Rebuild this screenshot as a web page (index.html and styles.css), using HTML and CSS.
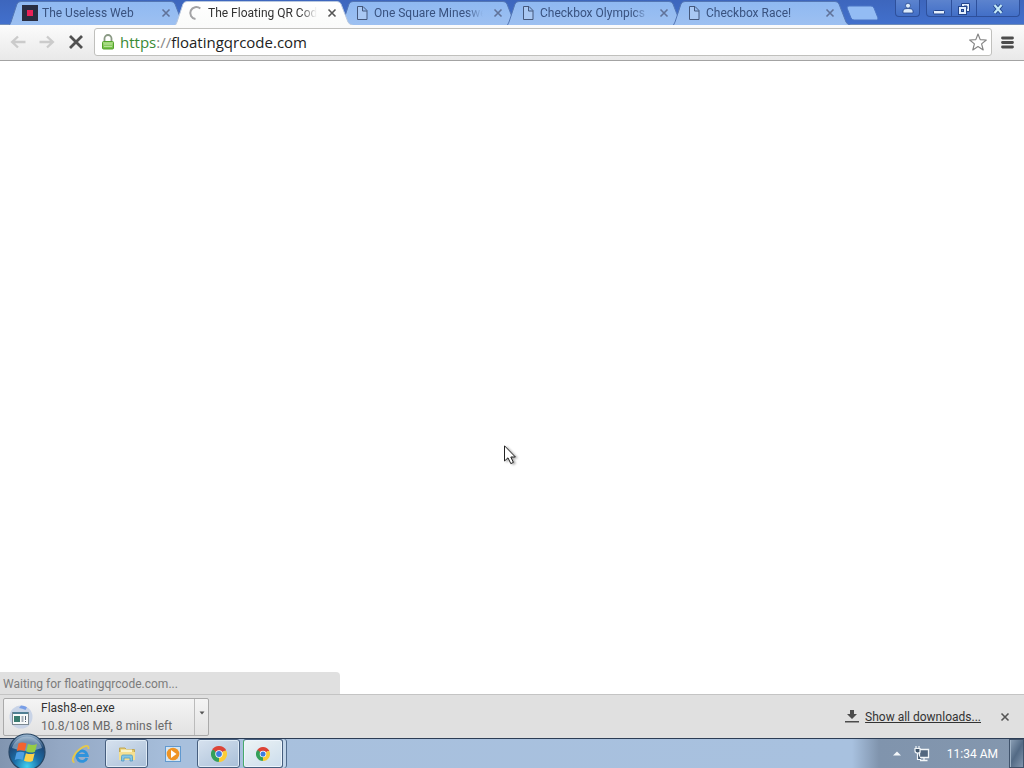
FILE: index.html
```html
<!DOCTYPE html>
<html lang="en">
<head>
<meta charset="utf-8">
<meta name="viewport" content="width=device-width, initial-scale=1">
<title>The Floating QR Code</title>
<link rel="stylesheet" href="styles.css">
</head>
<body>
<svg width="0" height="0" class="defs" aria-hidden="true">
  <defs>
    <linearGradient id="tabFill" x1="0" y1="0" x2="0" y2="1"><stop offset="0" stop-color="#8fb9f2"/><stop offset="1" stop-color="#9dc0f1"/></linearGradient>
    <linearGradient id="activeFill" x1="0" y1="0" x2="0" y2="1"><stop offset="0" stop-color="#ffffff"/><stop offset="1" stop-color="#fafbfa"/></linearGradient>
    <linearGradient id="lockFill" x1="0" y1="0" x2="0" y2="1"><stop offset="0" stop-color="#a9dc84"/><stop offset="1" stop-color="#6cbb3e"/></linearGradient>
    <radialGradient id="orb" cx="0.5" cy="0.9" r="0.9"><stop offset="0" stop-color="#3fd0f0"/><stop offset="0.4" stop-color="#1c6fa8"/><stop offset="0.75" stop-color="#1d4878"/><stop offset="1" stop-color="#a9c3da"/></radialGradient>
    <symbol id="tab" viewBox="0 0 178 25" preserveAspectRatio="none"><path d="M0.5 25 L2 22 L8 4 Q9 1.5 12 1.5 L162 1.5 Q165 1.5 166 4 L173 22 Q174 24.500 177.500 25" vector-effect="non-scaling-stroke"/></symbol>
    <symbol id="page" viewBox="0 0 16 16"><path d="M3.500 1.500 H9 L13 5.500 V14.500 H3.500 Z M8.500 1.500 V6 H13" fill="#a9c8f3" stroke="#44587c" stroke-width="1"/></symbol>
    <symbol id="close" viewBox="0 0 10 10"><path d="M1.500 1.500 L8.500 8.500 M8.500 1.500 L1.500 8.500" fill="none" stroke="currentColor" stroke-width="1.600"/></symbol>
    <symbol id="chrome" viewBox="0 0 16 16">
      <path d="M8 8 L1.070 4 A8 8 0 0 1 14.930 4 Z" fill="#dc4437"/>
      <path d="M8 8 L14.930 4 A8 8 0 0 1 8 16 Z" fill="#fbcc37"/>
      <path d="M8 8 L8 16 A8 8 0 0 1 1.070 4 Z" fill="#34a059"/>
      <path d="M8 4.500 H15.200 L14.500 3.500 H8 Z" fill="#dc4437"/>
      <path d="M5 9.700 L1.100 4 L3 4 L6 8 Z" fill="#34a059"/>
      <path d="M11.200 9.500 L7.500 16 L9 16 L12 9 Z" fill="#fbcc37"/>
      <circle cx="8" cy="8" r="3.700" fill="#fff"/><circle cx="8" cy="8" r="2.900" fill="#3d7de0"/>
    </symbol>
  </defs>
</svg>

<header class="tabstrip">
  <nav class="tabs" aria-label="Tabs">
    <div class="tab">
      <svg class="shape" aria-hidden="true"><use href="#tab"/></svg>
      <svg class="favicon" viewBox="0 0 16 16"><rect width="16" height="16" fill="#292d41"/><rect x="5" y="5" width="6" height="6" fill="#e92159"/></svg>
      <a class="title" href="#">The Useless Web</a>
      <button class="tab-close" aria-label="Close tab"><svg><use href="#close"/></svg></button>
    </div>
    <div class="tab active">
      <svg class="shape" aria-hidden="true"><use href="#tab"/></svg>
      <svg class="favicon" viewBox="0 0 16 16"><path d="M12.300 3.600 A6 6 0 1 0 7.500 14" fill="none" stroke="#a3a3a5" stroke-width="2"/></svg>
      <a class="title" href="#">The Floating QR Code</a>
      <button class="tab-close" aria-label="Close tab"><svg><use href="#close"/></svg></button>
    </div>
    <div class="tab">
      <svg class="shape" aria-hidden="true"><use href="#tab"/></svg>
      <svg class="favicon"><use href="#page"/></svg>
      <a class="title" href="#">One Square Minesweeper</a>
      <button class="tab-close" aria-label="Close tab"><svg><use href="#close"/></svg></button>
    </div>
    <div class="tab">
      <svg class="shape" aria-hidden="true"><use href="#tab"/></svg>
      <svg class="favicon"><use href="#page"/></svg>
      <a class="title" href="#">Checkbox Olympics</a>
      <button class="tab-close" aria-label="Close tab"><svg><use href="#close"/></svg></button>
    </div>
    <div class="tab">
      <svg class="shape" aria-hidden="true"><use href="#tab"/></svg>
      <svg class="favicon"><use href="#page"/></svg>
      <a class="title" href="#">Checkbox Race!</a>
      <button class="tab-close" aria-label="Close tab"><svg><use href="#close"/></svg></button>
    </div>
    <button class="new-tab" aria-label="New tab"><svg viewBox="0 0 34 16"><path d="M3 1 H25 Q27 1 28 3 L32 13 Q32 15 30.500 15 H8 Q6 15 5 13 L1 3 Q1 1 3 1 Z" fill="#93bcf4" stroke="#4a74c4"/></svg></button>
  </nav>
  <div class="window-controls">
    <button class="wc user" aria-label="User"><svg viewBox="0 0 12 12"><path d="M1 11 V9 Q1 6.500 6 6.500 Q11 6.500 11 9 V11 Z" fill="#dcebfb" stroke="#23458c" stroke-width="0.800"/><circle cx="6" cy="3.700" r="2.500" fill="#dcebfb" stroke="#23458c" stroke-width="0.800"/></svg></button>
    <div class="wc-group">
      <button class="wc" aria-label="Minimize"><svg viewBox="0 0 12 12"><rect x="0.500" y="7.500" width="11" height="3.500" rx="1" fill="#e4effc" stroke="#23458c"/></svg></button>
      <button class="wc" aria-label="Restore"><svg viewBox="0 0 12 12"><path d="M3.500 0.500 H11.500 V8.500 H3.500 Z" fill="#e4effc" stroke="#23458c"/><path d="M6 3 H9 V6" fill="none" stroke="#23458c"/><rect x="0.500" y="3.500" width="8" height="8" fill="#e4effc" stroke="#23458c"/><rect x="3.500" y="6.500" width="2" height="2" fill="#5986d8" stroke="#23458c"/></svg></button>
      <button class="wc wide" aria-label="Close"><svg viewBox="0 0 12 12"><path d="M2.500 2 L9.500 10 M9.500 2 L2.500 10" stroke="#23458c" stroke-width="4"/><path d="M2.500 2 L9.500 10 M9.500 2 L2.500 10" stroke="#c4e9f8" stroke-width="2.200"/></svg></button>
    </div>
  </div>
</header>

<div class="toolbar">
  <button class="nav" aria-label="Back"><svg viewBox="0 0 16 14"><path d="M15.500 7 H2 M8 1.500 L2.200 7 L8 12.500" fill="none" stroke="#cbcbcb" stroke-width="2.400"/></svg></button>
  <button class="nav" aria-label="Forward"><svg viewBox="0 0 16 14"><path d="M0.500 7 H14 M8 1.500 L13.800 7 L8 12.500" fill="none" stroke="#cbcbcb" stroke-width="2.400"/></svg></button>
  <button class="nav" aria-label="Stop"><svg viewBox="0 0 16 14"><path d="M2 1 L14 13 M14 1 L2 13" stroke="#505050" stroke-width="2.800"/></svg></button>
  <div class="omnibox">
    <svg class="lock" viewBox="0 0 12 16"><path d="M2.500 8 V4.500 A3.500 3.500 0 0 1 9.500 4.500 V8" fill="none" stroke="#8a9a84" stroke-width="1.800"/><rect x="0.500" y="7.500" width="11" height="7.500" rx="1" fill="url(#lockFill)" stroke="#54a32c"/><path d="M2 10 H10 M2 12.500 H10" stroke="#b8e39a"/></svg>
    <a class="url" href="#"><span class="secure">https</span><span class="sep">://</span>floatingqrcode.com</a>
    <button class="star" aria-label="Bookmark this page"><svg viewBox="0 0 18 18"><path d="M9 1 L11.200 6.600 L17.300 7 L12.600 10.900 L14.200 16.900 L9 13.600 L3.800 16.900 L5.400 10.900 L0.700 7 L6.800 6.600 Z" fill="#fff" stroke="#858585" stroke-width="1.200" stroke-linejoin="round"/></svg></button>
  </div>
  <button class="menu" aria-label="Menu"><svg viewBox="0 0 13 13"><path d="M1.500 2 H11.500 M1.500 6.500 H11.500 M1.500 11 H11.500" stroke="#4c4c4c" stroke-width="2.800" stroke-linecap="round"/></svg></button>
</div>

<main class="viewport">
  <svg class="cursor" viewBox="0 0 14 20" aria-hidden="true"><path d="M0.500 0.800 V16 L4 12.800 L6.800 18.600 L9.400 17.400 L6.800 12 H11.400 Z" fill="#fff" stroke="#222" stroke-width="1"/></svg>
  <div class="status">Waiting for floatingqrcode.com...</div>
</main>

<section class="downloads" aria-label="Downloads">
  <div class="download">
    <button class="file">
      <svg viewBox="0 0 24 24"><circle cx="12" cy="12" r="11.500" fill="#c9d4e7"/><path d="M12 0.500 A11.500 11.500 0 0 1 18 2.200 L16.500 5 Q13.500 3.500 10 3 Z" fill="#789ee7"/><rect x="3.500" y="7.500" width="16" height="12" fill="#f8fafa" stroke="#7c8991"/><path d="M4 8 H19" stroke="#507f94" stroke-width="2"/><rect x="5" y="11" width="6" height="6" fill="#397b70"/><path d="M12.500 12 H14.500 M12.500 14 H14.500 M12.500 16 H14.500 M16.500 11 V15 M16.500 16 V17" stroke="#536275"/></svg>
      <span class="file-text"><span>Flash8-en.exe</span><span class="progress">10.8/108 MB, 8 mins left</span></span>
    </button>
    <button class="more" aria-label="Download options"><svg viewBox="0 0 6 4"><path d="M0.500 0.500 H5.500 L3 3.500 Z" fill="#555"/></svg></button>
  </div>
  <a class="show-all" href="#"><svg viewBox="0 0 14 13" aria-hidden="true"><path d="M5 0 H9 V4 H12 L7 9 L2 4 H5 Z M0 11 H14 V12.500 H0 Z" fill="#4c4c4c"/></svg><span>Show all downloads...</span></a>
  <button class="shelf-close" aria-label="Close downloads bar"><svg><use href="#close"/></svg></button>
</section>

<footer class="taskbar">
  <button class="start" aria-label="Start"><svg viewBox="0 0 38 38"><circle cx="19" cy="19" r="18" fill="url(#orb)" stroke="#284664" stroke-width="1.200"/><path d="M4 15 A15.500 15.500 0 0 1 34 15 Q19 21 4 15" fill="#d3e2ed" opacity="0.450"/><path d="M10.500 10.500 Q14 8.500 18.500 10.500 L16.800 18 Q12.500 16.300 8.800 18 Z" fill="#f2622f"/><path d="M20 11 Q24.500 13 29 11 L27 18.700 Q23 20.500 18.200 18.600 Z" fill="#96cc45"/><path d="M8.500 19.500 Q12.500 17.800 16.500 19.500 L14.600 27 Q10.500 25.200 6.700 27 Z" fill="#4e9ee3"/><path d="M17.900 20.200 Q22.500 22 26.700 20.200 L24.700 28 Q20.500 29.800 16 27.800 Z" fill="#fdd14a"/></svg></button>
  <button class="task ie" aria-label="Internet Explorer"><svg viewBox="0 0 20 20"><path d="M16 14 A5.300 5.300 0 1 1 16.300 11.500 H6" fill="none" stroke="#2f93dc" stroke-width="2.800"/><path d="M3.500 18.500 C-1 17 4 8.500 9 5 C13 2 18 0 17.500 5" fill="none" stroke="#e6c84a" stroke-width="1.800"/></svg></button>
  <button class="task open" aria-label="File Explorer"><svg viewBox="0 0 20 20"><path d="M2.500 4 H8 L9.500 5.500 H17.500 V15 H2.500 Z" fill="#e6ca68" stroke="#bfa657"/><path d="M4 5.500 H15 V9 H4 Z" fill="#f9f4cc"/><path d="M2 8 H18 V16 H2 Z" fill="#f5df90"/><path d="M4.500 17 V12.500 Q4.500 11 6 11 H14 Q15.500 11 15.500 12.500 V17 H13 V14 H7 V17 Z" fill="#83c6e5" stroke="#509bc2" stroke-width="0.800"/></svg></button>
  <button class="task" aria-label="Media Player"><svg viewBox="0 0 20 20"><rect x="2.500" y="2.500" width="15" height="15" fill="#d5e5f2" stroke="#6199cf"/><circle cx="10" cy="10" r="6.300" fill="#ef9424"/><path d="M8 6 L13.500 10 L8 14 Z" fill="#fff"/></svg></button>
  <button class="task open" aria-label="Google Chrome"><svg class="chrome"><use href="#chrome"/></svg></button>
  <button class="task open current" aria-label="Google Chrome installer"><svg class="chrome small"><use href="#chrome"/></svg></button>
  <div class="tray">
    <button class="tray-btn" aria-label="Show hidden icons"><svg viewBox="0 0 8 5" class="up"><path d="M0 4.500 L4 0.500 L8 4.500 Z" fill="#f4f7fa"/></svg></button>
    <button class="tray-btn" aria-label="Network"><svg viewBox="0 0 16 16" class="net"><path d="M5.500 3.500 H14.500 V11.500 H5.500 Z M10 12 V14 M6 14.500 H13.500" fill="#52677f" stroke="#f1f5f8" stroke-width="1.300"/><path d="M1 2.500 H6 V6 Q6 7 3.500 7 Q1 7 1 5 Z M3.500 7 V13.500 H7 M2 0 V2 M5 0 V2" fill="#40556c" stroke="#f1f5f8" stroke-width="1.200"/></svg></button>
    <time class="clock">11:34 AM</time>
    <button class="show-desktop" aria-label="Show desktop"></button>
  </div>
</footer>
</body>
</html>
```
FILE: styles.css
```css
* { box-sizing: border-box; }

body {
  margin: 0;
  min-height: 100vh;
  display: flex;
  flex-direction: column;
  background: #fff;
  font-family: Roboto, "Noto Sans", sans-serif;
  font-size: 12px;
  line-height: 16px;
  color: #333;
}

button {
  padding: 0;
  border: 0;
  background: none;
  font: inherit;
  color: inherit;
  display: flex;
  align-items: center;
  justify-content: center;
}

a { color: inherit; text-decoration: none; }
svg { display: block; flex: none; }
.defs { position: absolute; }

/* Tab strip */
.tabstrip {
  height: 25px;
  display: flex;
  justify-content: space-between;
  background: linear-gradient(#3d66bd, #4270cc);
  border-bottom: 1px solid #6f8cb8;
}

.tabs {
  display: flex;
  flex: 1;
  min-width: 0;
  padding-left: 9px;
}

.tab {
  position: relative;
  flex: 0 1 178px;
  min-width: 0;
  height: 25px;
  padding: 0 16px 0 13px;
  display: flex;
  align-items: center;
  gap: 4px;
  color: #39527f;
}

.tab + .tab { margin-left: -12px; }
.tab.active { z-index: 1; color: #333; }

.shape {
  position: absolute;
  inset: 0;
  width: 100%;
  height: 100%;
  fill: url(#tabFill);
  stroke: #5376b4;
  stroke-width: 1;
}

.active .shape { fill: url(#activeFill); stroke: #b8c8df; }

.favicon { position: relative; width: 16px; height: 16px; }

.title {
  position: relative;
  flex: 1;
  min-width: 0;
  overflow: hidden;
  white-space: nowrap;
  margin-right: 6px;
  mask-image: linear-gradient(90deg, #000 85%, transparent);
}

.tab-close { position: relative; color: #607299; }
.active .tab-close { color: #555; }
.tab-close svg, .shelf-close svg { width: 10px; height: 10px; }

.new-tab { align-self: flex-start; padding-top: 5px; margin-left: -5px; }
.new-tab svg { width: 34px; height: 16px; }

.window-controls { display: flex; gap: 6px; padding-right: 4px; }

.wc { width: 25px; height: 17px; border-right: 1px solid #2e509b; }
.wc svg { width: 12px; height: 12px; }
.wc-group { display: flex; height: 17px; border: 1px solid #2e509b; border-top: 0; border-radius: 0 0 4px 4px; background: linear-gradient(#5c83ce, #426fc7); }
.wc.user { border: 1px solid #2e509b; border-top: 0; border-radius: 0 0 4px 4px; background: linear-gradient(#5c83ce, #426fc7); }
.wc.wide { width: 42px; border-right: 0; }

/* Toolbar */
.toolbar {
  height: 36px;
  display: flex;
  align-items: center;
  gap: 13px;
  padding: 0 10px 1px;
  background: linear-gradient(#fbfbfb, #e9e9e9);
  border-bottom: 1px solid #a3a3a3;
}

.nav svg { width: 16px; height: 14px; }

.omnibox {
  flex: 1;
  min-width: 0;
  height: 28px;
  margin: 0 -4px 0 -3px;
  padding: 0 4px 0 7px;
  display: flex;
  align-items: center;
  gap: 6px;
  background: #fff;
  border: 1px solid #c0c0bd;
  border-radius: 3px;
}

.lock { width: 12px; height: 16px; }
.url { flex: 1; font-family: "Open Sans", "Noto Sans", sans-serif; font-size: 15px; line-height: 20px; color: #222; }
.secure { color: #398a35; }
.sep { color: #888; }
.star svg { width: 18px; height: 18px; }
.menu svg { width: 13px; height: 13px; }

/* Page area */
.viewport { position: relative; flex: 1; }

.cursor {
  position: absolute;
  left: 504px;
  top: 384px;
  width: 14px;
  height: 20px;
  filter: drop-shadow(2px 1px 1px #0005);
}

.status {
  position: absolute;
  left: 0;
  bottom: 0;
  width: 340px;
  max-width: 100%;
  height: 22px;
  padding: 4px 3px 2px;
  background: #e0e0e0;
  border-radius: 0 4px 0 0;
  color: #7c7c7c;
}

/* Download shelf */
.downloads {
  height: 44px;
  display: flex;
  align-items: center;
  padding: 0 14px 0 3px;
  background: #e0e0e0;
  border-top: 1px solid #c4c4c4;
}

.download {
  display: flex;
  width: 206px;
  height: 38px;
  margin-right: auto;
  border: 1px solid #aaa;
  border-radius: 2px;
  background: linear-gradient(#f4f4f4, #e2e2e2);
}

.file { flex: 1; justify-content: flex-start; gap: 8px; padding-left: 5px; text-align: left; white-space: nowrap; }
.file svg { width: 24px; height: 24px; }
.file-text { display: flex; flex-direction: column; line-height: 18px; }
.progress { color: #6a6a6a; }
.more { width: 14px; padding-bottom: 8px; border-left: 1px solid #bbb; }
.more svg { width: 6px; height: 4px; }

.show-all { display: flex; align-items: center; gap: 6px; color: #333; }
.show-all span { text-decoration: underline; }
.show-all svg { width: 14px; height: 13px; }
.shelf-close { margin-left: 19px; color: #555; }

/* Taskbar */
.taskbar {
  height: 30px;
  display: flex;
  align-items: stretch;
  gap: 3px;
  padding-left: 8px;
  border-top: 1px solid #2c3d55;
  background: linear-gradient(90deg, #8195b0 0, #94a8c4 60px, #a8c0dd 180px, #a8c1df calc(100% - 172px), #8094ad calc(100% - 145px), #8497ae 100%);
}

.start { position: relative; width: 38px; height: 38px; margin-top: -6px; }
.start svg { width: 38px; height: 38px; }

.task { width: 43px; }
.task svg { width: 20px; height: 20px; }
.task.ie { width: 53px; padding-left: 10px; }
.task svg.chrome { width: 16px; height: 16px; }
.task svg.small { width: 14px; height: 14px; }
.task.open { border: 1px solid #465e7e; border-radius: 3px; background: linear-gradient(150deg, #d7e2ef, #a9bfd8); box-shadow: inset 0 0 0 1px #dfebf6; }
.task.current { width: 40px; border-left-color: #46a96a; background: linear-gradient(150deg, #edf4f5, #cbdcec); box-shadow: inset 0 0 0 1px #edf5fc, 3px 0 0 #c2d5e9, 4px 0 0 #506b8d; }

.tray { margin-left: auto; display: flex; align-items: center; color: #fff; }
.tray-btn { padding-right: 13px; }
.tray-btn + .tray-btn { padding-right: 17px; }
.up { width: 8px; height: 5px; }
.net { width: 16px; height: 16px; }
.clock { margin-right: 11px; }
.show-desktop { align-self: stretch; width: 15px; border: 1px solid #40536b; background: linear-gradient(120deg, #8da1b7, #536a85 50%, #8195ad); box-shadow: inset 1px 0 0 #9fb2c6; }
```
